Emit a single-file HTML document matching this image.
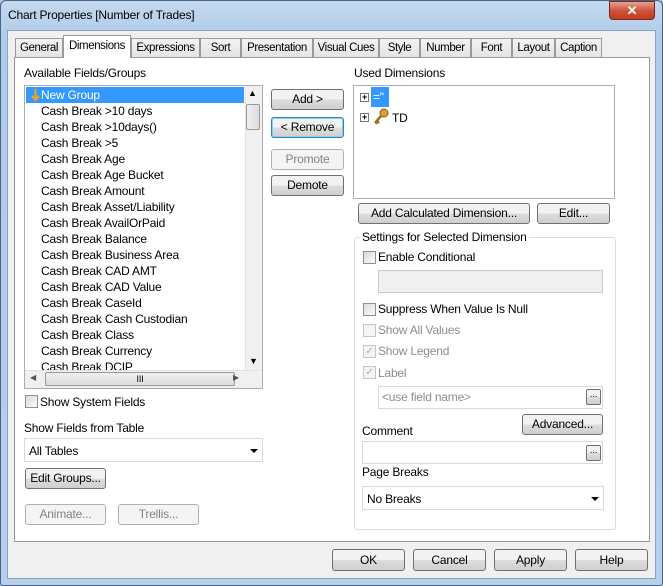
<!DOCTYPE html>
<html><head><meta charset="utf-8"><style>
*{box-sizing:border-box;margin:0;padding:0}
body{width:663px;height:586px;overflow:hidden;font-family:"Liberation Sans",sans-serif;font-size:12px;letter-spacing:-0.2px;color:#000;position:relative;background:#a9c6e6}
.a{position:absolute}
.frame{left:0;top:0;width:663px;height:586px;background:linear-gradient(#c4d8ee,#aecbea 40px,#b6d0ec);border:1px solid #4a6584;border-radius:6px 6px 3px 3px}
.client{left:7px;top:30px;width:649px;height:549px;background:#f0f0f0;border:1px solid #8ba3c0}
.tab{position:absolute;top:38px;height:20px;border:1px solid #9a9a9a;border-bottom:none;background:linear-gradient(#f3f3f3,#e3e3e3);text-align:center;line-height:18px;font-size:11.5px;letter-spacing:-0.4px;white-space:nowrap}
.tab.sel{top:35px;height:23px;background:#fff;z-index:3;line-height:20px}
.panel{left:14px;top:57px;width:636px;height:485px;background:#fff;border:1px solid #9a9a9a;z-index:2}
.btn{position:absolute;height:21px;border:1px solid #707070;border-radius:3px;background:linear-gradient(#f2f2f2 50%,#dddddd 50%,#cfcfcf);text-align:center;line-height:19px;z-index:4}
.btn.dis{border-color:#adb2b5;background:#f4f4f4;color:#838383}
.z{z-index:4}
.box{position:absolute;border:1px solid #abadb3;background:#fff;z-index:4}
.cb{position:absolute;width:13px;height:13px;border:1px solid #8e8f8f;background:linear-gradient(135deg,#dcdcdc,#fafafa);z-index:4}
.cb.dis{border-color:#c5c5c5;background:#f4f4f4}
.item{position:absolute;left:41px;height:16px;line-height:16px;z-index:5}
.gray{color:#8d8d8d}
.dd{position:absolute;width:0;height:0;border-left:4px solid transparent;border-right:4px solid transparent;border-top:4px solid #000}
</style></head><body>
<div class="a frame"></div>
<div class="a" style="left:8px;top:8px;font-size:12px;color:#000">Chart Properties [Number of Trades]</div>
<div class="a" style="left:609px;top:1px;width:46px;height:19px;border:1px solid #7a2a20;border-radius:0 0 4px 4px;background:linear-gradient(#e8a493,#d0533d 50%,#c23a22);color:#fff;text-align:center;font-weight:bold;font-size:13px;line-height:17px">✕</div>
<div class="a client"></div>

<div class="tab" style="left:15px;width:48px">General</div>
<div class="tab sel" style="left:63px;width:68px">Dimensions</div>
<div class="tab" style="left:131px;width:69px">Expressions</div>
<div class="tab" style="left:200px;width:41px">Sort</div>
<div class="tab" style="left:241px;width:72px">Presentation</div>
<div class="tab" style="left:313px;width:66px">Visual Cues</div>
<div class="tab" style="left:379px;width:41px">Style</div>
<div class="tab" style="left:420px;width:51px">Number</div>
<div class="tab" style="left:471px;width:41px">Font</div>
<div class="tab" style="left:512px;width:43px">Layout</div>
<div class="tab" style="left:555px;width:47px">Caption</div>
<div class="a panel"></div>

<div class="a z" style="left:24px;top:66px">Available Fields/Groups</div>
<div class="box" style="left:24px;top:85px;width:239px;height:304px;overflow:hidden">
 <div class="a" style="left:1px;top:1px;width:218px;height:16px;background:#3399ff"></div>
 <div class="a" style="left:220px;top:0;width:17px;height:284px;background:#f0f0f0;border-left:1px solid #e3e3e3"></div>
 <div class="a" style="left:223px;top:2px;font-size:9px">▲</div>
 <div class="a" style="left:221px;top:18px;width:14px;height:26px;border:1px solid #9a9a9a;border-radius:2px;background:linear-gradient(90deg,#f0f0f0,#dcdcdc)"></div>
 <div class="a" style="left:224px;top:270px;font-size:9px">▼</div>
 <div class="a" style="left:0;top:284px;width:237px;height:18px;background:#f0f0f0;border-top:1px solid #e3e3e3"></div>
 <div class="a" style="left:5px;top:287px;font-size:8px;color:#555">◀</div>
 <div class="a" style="left:20px;top:286px;width:190px;height:14px;border:1px solid #9a9a9a;border-radius:2px;background:linear-gradient(#f0f0f0,#dcdcdc);text-align:center;font-size:9px;line-height:12px">III</div>
 <div class="a" style="left:208px;top:287px;font-size:8px;color:#555">▶</div>
 <svg class="a" style="left:6px;top:3px" width="9" height="13" viewBox="0 0 9 13"><path d="M4.5 0 V10 M1 7 L4.5 11 L8 7" stroke="#f0a020" stroke-width="2.2" fill="none"/></svg>
</div>
<div class="item" style="top:87px;color:#fff">New Group</div>
<div class="item" style="top:103px">Cash Break &gt;10 days</div>
<div class="item" style="top:119px">Cash Break &gt;10days()</div>
<div class="item" style="top:135px">Cash Break &gt;5</div>
<div class="item" style="top:151px">Cash Break Age</div>
<div class="item" style="top:167px">Cash Break Age Bucket</div>
<div class="item" style="top:183px">Cash Break Amount</div>
<div class="item" style="top:199px">Cash Break Asset/Liability</div>
<div class="item" style="top:215px">Cash Break AvailOrPaid</div>
<div class="item" style="top:231px">Cash Break Balance</div>
<div class="item" style="top:247px">Cash Break Business Area</div>
<div class="item" style="top:263px">Cash Break CAD AMT</div>
<div class="item" style="top:279px">Cash Break CAD Value</div>
<div class="item" style="top:295px">Cash Break CaseId</div>
<div class="item" style="top:311px">Cash Break Cash Custodian</div>
<div class="item" style="top:327px">Cash Break Class</div>
<div class="item" style="top:343px">Cash Break Currency</div>
<div class="item" style="top:359px;height:11px;overflow:hidden">Cash Break DCIP</div>

<div class="btn" style="left:271px;top:89px;width:73px">Add &gt;</div>
<div class="btn" style="left:271px;top:117px;width:73px;border-color:#3c7fb1;box-shadow:inset 0 0 0 1px #7ed3f7">&lt; Remove</div>
<div class="btn dis" style="left:271px;top:149px;width:73px">Promote</div>
<div class="btn" style="left:271px;top:175px;width:73px">Demote</div>

<div class="cb" style="left:25px;top:395px"></div>
<div class="a z" style="left:40px;top:395px">Show System Fields</div>
<div class="a z" style="left:24px;top:421px">Show Fields from Table</div>
<div class="box" style="left:24px;top:438px;width:239px;height:24px;border-color:#d9d9d9"><span class="a" style="left:4px;top:5px">All Tables</span><span class="dd" style="left:225px;top:10px"></span></div>
<div class="btn" style="left:25px;top:468px;width:81px">Edit Groups...</div>
<div class="btn dis" style="left:25px;top:504px;width:81px">Animate...</div>
<div class="btn dis" style="left:118px;top:504px;width:81px">Trellis...</div>

<div class="a z" style="left:354px;top:66px">Used Dimensions</div>
<div class="box" style="left:353px;top:85px;width:262px;height:114px">
 <div class="a" style="left:6px;top:7px;width:9px;height:9px;border:1px solid #777;font-size:9px;line-height:7px;text-align:center;font-weight:bold">+</div>
 <div class="a" style="left:17px;top:1px;width:18px;height:20px;background:#3399ff;color:#fff;padding:3px 0 0 2px">="</div>
 <div class="a" style="left:6px;top:27px;width:9px;height:9px;border:1px solid #777;font-size:9px;line-height:7px;text-align:center;font-weight:bold">+</div>
 <svg class="a" style="left:19px;top:22px" width="16" height="17" viewBox="0 0 16 17"><circle cx="11" cy="5" r="4" fill="#d9a233" stroke="#8a5c10"/><path d="M8 8 L2 15 M4 13 L6 15 M3 14 L4 16" stroke="#a06e1a" stroke-width="2.5" fill="none"/></svg>
 <div class="a" style="left:38px;top:25px">TD</div>
</div>
<div class="btn" style="left:358px;top:203px;width:172px">Add Calculated Dimension...</div>
<div class="btn" style="left:537px;top:203px;width:73px">Edit...</div>

<div class="a z" style="left:354px;top:237px;width:262px;height:293px;border:1px solid #d5dfe5;border-radius:3px"></div>
<div class="a z" style="left:360px;top:230px;background:#fff;padding:0 2px">Settings for Selected Dimension</div>
<div class="cb" style="left:363px;top:251px"></div>
<div class="a z" style="left:378px;top:250px">Enable Conditional</div>
<div class="box" style="left:378px;top:270px;width:225px;height:23px;background:#f0f0f0;border-color:#c9c9c9"></div>
<div class="cb" style="left:363px;top:303px"></div>
<div class="a z" style="left:378px;top:302px">Suppress When Value Is Null</div>
<div class="cb dis" style="left:363px;top:324px"></div>
<div class="a z gray" style="left:378px;top:323px">Show All Values</div>
<div class="cb dis" style="left:363px;top:345px;font-size:10px;color:#aaa;line-height:11px;text-align:center">✓</div>
<div class="a z gray" style="left:378px;top:344px">Show Legend</div>
<div class="cb dis" style="left:363px;top:366px;font-size:10px;color:#aaa;line-height:11px;text-align:center">✓</div>
<div class="a z gray" style="left:378px;top:366px">Label</div>
<div class="box" style="left:378px;top:386px;width:225px;height:23px;border-color:#d9d9d9"><span class="a gray" style="left:3px;top:3px">&lt;use field name&gt;</span></div>
<div class="btn" style="left:586px;top:389px;width:15px;height:16px;line-height:10px;font-size:10px;border-radius:2px">...</div>
<div class="btn" style="left:522px;top:414px;width:81px">Advanced...</div>
<div class="a z" style="left:362px;top:424px">Comment</div>
<div class="box" style="left:362px;top:441px;width:241px;height:23px;border-color:#d9d9d9"></div>
<div class="btn" style="left:586px;top:445px;width:15px;height:16px;line-height:10px;font-size:10px;border-radius:2px">...</div>
<div class="a z" style="left:362px;top:465px">Page Breaks</div>
<div class="box" style="left:362px;top:486px;width:242px;height:24px;border-color:#d9d9d9"><span class="a" style="left:4px;top:5px">No Breaks</span><span class="dd" style="left:228px;top:10px"></span></div>

<div class="btn" style="left:332px;top:549px;width:73px;height:22px;line-height:20px">OK</div>
<div class="btn" style="left:413px;top:549px;width:73px;height:22px;line-height:20px">Cancel</div>
<div class="btn" style="left:494px;top:549px;width:73px;height:22px;line-height:20px">Apply</div>
<div class="btn" style="left:575px;top:549px;width:73px;height:22px;line-height:20px">Help</div>
</body></html>
